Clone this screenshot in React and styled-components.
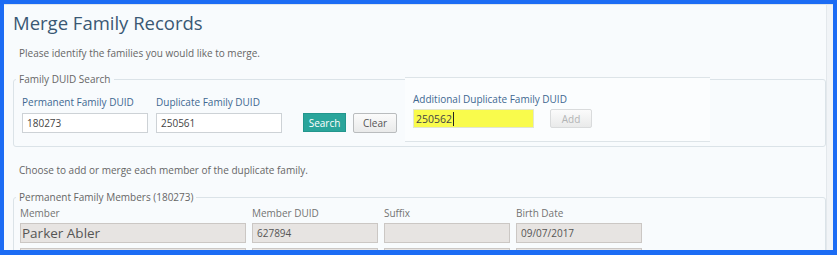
import React from "react";
import styled, { createGlobalStyle } from "styled-components";

const Global = createGlobalStyle`
  html, body { margin: 0; padding: 0; background: #1c6cf4; }
  * { box-sizing: border-box; }
  body { font-family: "Open Sans", "Liberation Sans", sans-serif; }
`;

const Frame = styled.div`
  width: 837px;
  height: 255px;
  padding: 4px 4px 5px 4px;
  background: #1c6cf4;
`;

const Page = styled.div`
  height: 246px;
  display: flex;
  background: #f1f4f7;
  border-top: 1px solid #dfe6ec;
  overflow: hidden;
`;

const Content = styled.div`
  width: 823px;
  height: 100%;
  background: #f8fbfd;
  border-right: 1px solid #e3e8ec;
  padding: 5px 0 0 9px;
  overflow: hidden;
`;

const Title = styled.h1`
  margin: 0;
  font-size: 18.5px;
  line-height: 26px;
  font-weight: 400;
  color: #3a5874;
`;

const Intro = styled.p`
  margin: ${(p) => p.$mt}px 0 0 6px;
  font-size: 10px;
  line-height: 14px;
  color: #666;
`;

const Wrap = styled.div`
  position: relative;
  margin-top: ${(p) => p.$mt}px;
  width: 813px;
`;

const Fieldset = styled.fieldset`
  margin: 0;
  padding: 0;
  border: 1px solid #dbe3e8;
  border-radius: 3px;
  min-width: 0;
`;

const Legend = styled.legend`
  margin-left: 2px;
  padding: 0 3px;
  font-size: 10px;
  line-height: 14px;
  color: #666;
`;

const Inner = styled.div`
  padding: ${(p) => p.$pad};
`;

const SearchRow = styled.div`
  display: flex;
  align-items: flex-end;
`;

const Group = styled.div`
  display: flex;
  flex-direction: column;
  width: ${(p) => p.$w}px;
  margin-right: ${(p) => p.$mr || 0}px;
`;

const BlueLabel = styled.label`
  font-size: 10px;
  line-height: 14px;
  color: #3e6891;
  white-space: nowrap;
  margin-bottom: ${(p) => p.$mb}px;
`;

const TextInput = styled.input`
  width: 100%;
  height: 20px;
  padding: 0 4px;
  border: 1px solid #cdd2d6;
  background: #fff;
  font-family: inherit;
  font-size: 10px;
  color: #444;
  outline: none;
`;

const SearchButton = styled.button`
  width: 43px;
  height: 19px;
  margin: 0 7px 1px 21px;
  padding: 0;
  border: 1px solid #23968d;
  background: #2aa59b;
  color: #fff;
  font-family: inherit;
  font-size: 10px;
`;

const GrayButton = styled.button`
  width: ${(p) => p.$w}px;
  height: ${(p) => p.$h}px;
  padding: 0;
  border: 1px solid ${(p) => (p.disabled ? "#d9dbdc" : "#b9bcbe")};
  border-radius: 2px;
  background: linear-gradient(#fbfbfb, #e9eaea);
  color: ${(p) => (p.disabled ? "#b2b4b5" : "#555")};
  font-family: inherit;
  font-size: 10px;
`;

const AddPanel = styled.div`
  position: absolute;
  left: 392px;
  top: 5px;
  width: 305px;
  height: 65px;
  background: #fbfdfe;
  border-top: 1px solid #dde4e8;
  border-bottom: 1px solid #dde4e8;
  padding: 14px 0 0 8px;
`;

const AddRow = styled.div`
  display: flex;
  align-items: center;
  gap: 16px;
`;

const YellowField = styled.div`
  width: 121px;
  height: 19px;
  padding: 0 2px;
  display: flex;
  align-items: center;
  border: 1px solid #e3e6cf;
  background: #f9fb4c;
  font-size: 10.5px;
  color: #444;
`;

const Caret = styled.span`
  display: inline-block;
  width: 1px;
  height: 14px;
  margin-left: 1px;
  background: #222;
`;

const MemberGrid = styled.div`
  display: grid;
  grid-template-columns: 226px 126px 126px 126px;
  column-gap: 6px;
  row-gap: 5px;
`;

const ColLabel = styled.div`
  font-size: 10px;
  line-height: 14px;
  color: #737373;
  margin-bottom: -2px;
`;

const ReadField = styled.div`
  height: 20px;
  padding: 0 ${(p) => (p.$big ? 1 : 4)}px;
  display: flex;
  align-items: center;
  border: 1px solid #cbc7c4;
  background: #e7e4e2;
  font-size: ${(p) => (p.$big ? 13.5 : 10)}px;
  color: #555;
  white-space: nowrap;
`;

export default function App() {
  return (
    <>
      <Global />
      <Frame>
        <Page>
          <Content>
            <Title>Merge Family Records</Title>
            <Intro $mt={10}>Please identify the families you would like to merge.</Intro>

            <Wrap $mt={12}>
              <Fieldset>
                <Legend>Family DUID Search</Legend>
                <Inner $pad="9px 8px 13px 8px">
                  <SearchRow>
                    <Group $w={126} $mr={8}>
                      <BlueLabel $mb={4}>Permanent Family DUID</BlueLabel>
                      <TextInput readOnly value="180273" />
                    </Group>
                    <Group $w={126}>
                      <BlueLabel $mb={4}>Duplicate Family DUID</BlueLabel>
                      <TextInput readOnly value="250561" />
                    </Group>
                    <SearchButton>Search</SearchButton>
                    <GrayButton $w={44} $h={20}>Clear</GrayButton>
                  </SearchRow>
                </Inner>
              </Fieldset>
              <AddPanel>
                <BlueLabel $mb={3} as="div">Additional Duplicate Family DUID</BlueLabel>
                <AddRow>
                  <YellowField>
                    250562<Caret />
                  </YellowField>
                  <GrayButton $w={42} $h={19} disabled>Add</GrayButton>
                </AddRow>
              </AddPanel>
            </Wrap>

            <Intro $mt={16}>Choose to add or merge each member of the duplicate family.</Intro>

            <Wrap $mt={13}>
              <Fieldset>
                <Legend>Permanent Family Members (180273)</Legend>
                <Inner $pad="2px 6px 10px 6px">
                  <MemberGrid>
                    <ColLabel>Member</ColLabel>
                    <ColLabel>Member DUID</ColLabel>
                    <ColLabel>Suffix</ColLabel>
                    <ColLabel>Birth Date</ColLabel>
                    <ReadField $big>Parker Abler</ReadField>
                    <ReadField>627894</ReadField>
                    <ReadField />
                    <ReadField>09/07/2017</ReadField>
                    <ReadField />
                    <ReadField />
                    <ReadField />
                    <ReadField />
                  </MemberGrid>
                </Inner>
              </Fieldset>
            </Wrap>
          </Content>
        </Page>
      </Frame>
    </>
  );
}
